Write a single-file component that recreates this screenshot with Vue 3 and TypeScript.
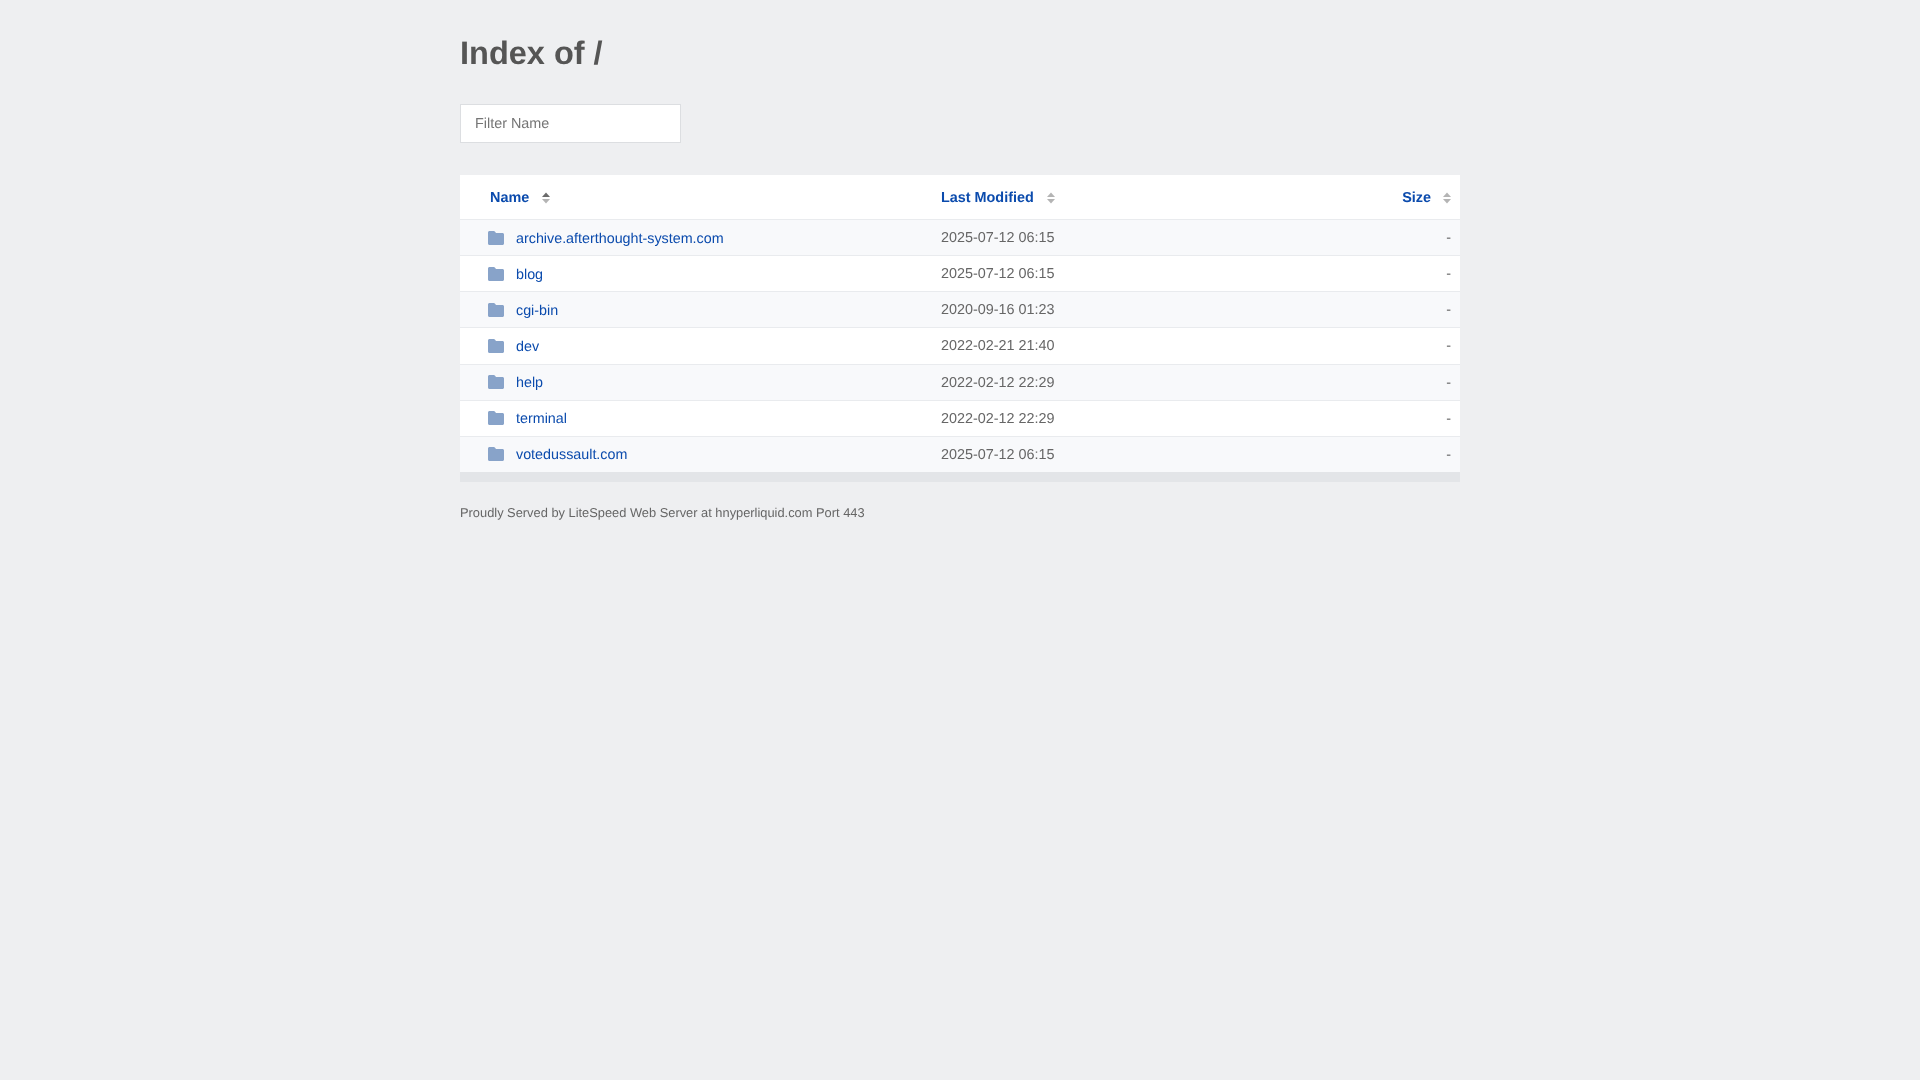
<template>
  <div class="page">
    <h1 class="title">Index of /</h1>
    <input class="filter" type="text" placeholder="Filter Name" />
    <table class="listing">
      <thead>
        <tr>
          <th class="col-name">
            <a class="sort-link">Name</a>
            <svg class="sort-icon" viewBox="0 0 10 12" width="10" height="12">
              <path d="M5 0.5 9 5H1z" fill="#6b6b6b" />
              <path d="M1 7h8L5 11.5z" fill="#b4b4b4" />
            </svg>
          </th>
          <th class="col-date">
            <a class="sort-link">Last Modified</a>
            <svg class="sort-icon" viewBox="0 0 10 12" width="10" height="12">
              <path d="M5 0.5 9 5H1z" fill="#b4b4b4" />
              <path d="M1 7h8L5 11.5z" fill="#b4b4b4" />
            </svg>
          </th>
          <th class="col-size">
            <a class="sort-link">Size</a>
            <svg class="sort-icon" viewBox="0 0 10 12" width="10" height="12">
              <path d="M5 0.5 9 5H1z" fill="#b4b4b4" />
              <path d="M1 7h8L5 11.5z" fill="#b4b4b4" />
            </svg>
          </th>
        </tr>
      </thead>
      <tbody>
        <tr v-for="entry in entries" :key="entry.name">
          <td class="col-name">
            <a class="entry-link">
              <svg class="folder" viewBox="0 0 16 14" width="16" height="14">
                <path
                  d="M1.5 0h4.2c.5 0 .9.2 1.2.6L8 2h6.5c.8 0 1.5.7 1.5 1.5v9c0 .8-.7 1.5-1.5 1.5h-13C.7 14 0 13.3 0 12.5v-11C0 .7.7 0 1.5 0z"
                  fill="#88a3c9"
                />
              </svg>
              <span>{{ entry.name }}</span>
            </a>
          </td>
          <td class="col-date">{{ entry.modified }}</td>
          <td class="col-size">-</td>
        </tr>
      </tbody>
    </table>
    <div class="table-foot"></div>
    <address class="server">Proudly Served by LiteSpeed Web Server at hnyperliquid.com Port 443</address>
  </div>
</template>

<script setup lang="ts">
interface Entry {
  name: string;
  modified: string;
}

const entries: Entry[] = [
  { name: "archive.afterthought-system.com", modified: "2025-07-12 06:15" },
  { name: "blog", modified: "2025-07-12 06:15" },
  { name: "cgi-bin", modified: "2020-09-16 01:23" },
  { name: "dev", modified: "2022-02-21 21:40" },
  { name: "help", modified: "2022-02-12 22:29" },
  { name: "terminal", modified: "2022-02-12 22:29" },
  { name: "votedussault.com", modified: "2025-07-12 06:15" },
];
</script>

<style>
html,
body {
  background: #eeeff1;
}
</style>

<style scoped>
.page {
  width: 1000px;
  margin: 0 auto;
  font-family: "Liberation Sans", Arial, sans-serif;
  font-size: 14.4px;
  color: #666;
  text-rendering: geometricPrecision;
  will-change: transform;
}

.title {
  margin: 0;
  padding-top: 32px;
  font-size: 32.5px;
  line-height: 42px;
  font-weight: 700;
  color: #555;
}

.filter {
  display: block;
  box-sizing: border-box;
  width: 221px;
  height: 39px;
  margin-top: 30px;
  padding: 0 14px;
  border: 1px solid #dcdee1;
  background: #fff;
  font-family: inherit;
  font-size: 14.4px;
  text-rendering: geometricPrecision;
  outline: none;
}

.filter::placeholder {
  color: #757575;
}

.listing {
  width: 100%;
  margin-top: 32px;
  border-collapse: collapse;
  table-layout: fixed;
}

th {
  height: 42px;
  padding: 2px 8px 0;
  background: #fff;
  border-bottom: 1px solid #e9ebee;
  font-weight: 700;
  text-align: left;
}

td {
  height: 33.15px;
  padding: 2px 8px 0;
  border-bottom: 1px solid #e9ebee;
  background: #fff;
}

td.col-date,
td.col-size {
  padding-top: 1px;
  height: 34.15px;
}

tbody tr:nth-child(odd) td {
  background: #f8f9fb;
}

tbody tr:last-child td {
  border-bottom: 0;
}

th.col-name {
  width: 435px;
  padding-left: 30px;
}

td.col-name {
  padding-left: 28px;
}

.col-date {
  width: 300px;
}

.col-size {
  text-align: right;
}

td.col-size {
  padding-right: 9px;
}

.sort-link {
  color: #0b4bad;
}

.sort-icon {
  margin-left: 12px;
  vertical-align: -2px;
}

th.col-size .sort-icon {
  margin-left: 11px;
}

.entry-link {
  display: flex;
  align-items: center;
  gap: 12px;
  font-size: 14.32px;
  color: #0b4bad;
}

.folder {
  flex: none;
  margin-top: -2px;
}

.table-foot {
  height: 10px;
  background: #e3e5e8;
}

.server {
  margin-top: 23px;
  font-size: 12.85px;
  line-height: 15px;
  font-style: normal;
  color: #666;
}
</style>
